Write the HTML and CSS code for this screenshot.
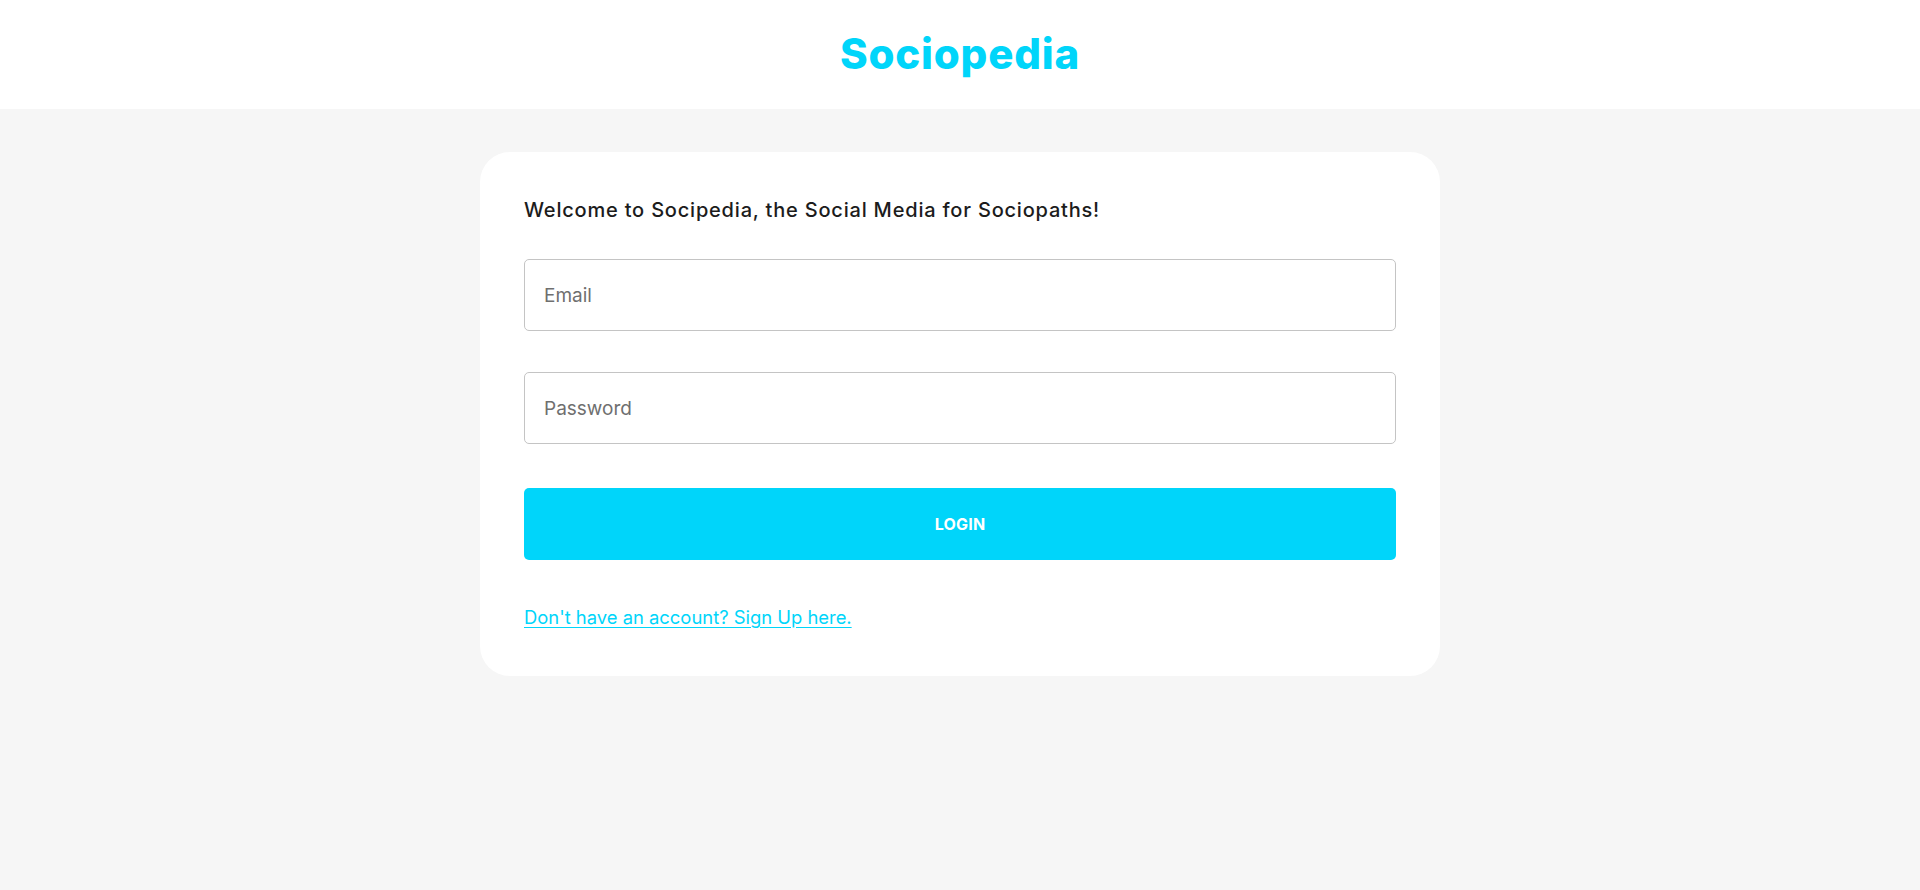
FILE: index.html
```html
<!DOCTYPE html>
<html lang="en">
<head>
<meta charset="utf-8">
<title>Sociopedia</title>
<link rel="stylesheet" href="styles.css">
</head>
<body>
<header class="topbar">
  <h1 class="brand">Sociopedia</h1>
</header>
<main class="page">
  <section class="card">
    <h5 class="welcome">Welcome to Socipedia, the Social Media for Sociopaths!</h5>
    <form class="form">
      <div class="field"><input class="input" type="email" placeholder="Email"></div>
      <div class="field field-gap"><input class="input" type="password" placeholder="Password"></div>
      <button class="btn" type="button">LOGIN</button>
      <a class="switch" href="#">Don't have an account? Sign Up here.</a>
    </form>
  </section>
</main>
</body>
</html>
```

FILE: styles.css
```css
* { box-sizing: border-box; }
html, body {
  margin: 0;
  padding: 0;
  height: 100%;
}
body {
  background: #f6f6f6;
  font-family: Inter, "Noto Sans", sans-serif;
  color: #1f1f1f;
}
.topbar {
  background: #ffffff;
  height: 109px;
  display: flex;
  align-items: center;
  justify-content: center;
}
.brand {
  margin: 0;
  font-family: Inter, sans-serif;
  font-weight: 800;
  font-size: 42px;
  line-height: 1;
  color: #00d5fa;
  letter-spacing: 0.8px;
  padding-bottom: 1px;
}
.page {
  display: flex;
  justify-content: center;
  padding-top: 43px;
}
.card {
  width: 960px;
  background: #ffffff;
  border-radius: 30px;
  padding: 46px 44px 47px;
}
.welcome {
  margin: 0 0 37px;
  font-size: 20px;
  line-height: 24px;
  font-weight: 500;
  letter-spacing: 0.8px;
  color: #1c1c1c;
}
.form {
  display: flex;
  flex-direction: column;
}
.field-gap { margin-top: 41px; }
.input {
  display: block;
  width: 100%;
  height: 72px;
  border: 1px solid #c4c4c4;
  border-radius: 5px;
  padding: 0 19px;
  font-family: Inter, sans-serif;
  font-size: 19px;
  color: #333;
  background: #fff;
  outline: none;
}
.input::placeholder { color: #6f6f6f; opacity: 1; }
.btn {
  margin-top: 44px;
  height: 72px;
  border: none;
  border-radius: 5px;
  background: #00d5fa;
  color: #ffffff;
  font-family: Inter, sans-serif;
  font-weight: 700;
  font-size: 16px;
  letter-spacing: 0.2px;
}
.switch {
  margin-top: 45px;
  align-self: flex-start;
  font-size: 18.4px;
  line-height: 24px;
  color: #00d5fa;
  text-decoration: underline;
  text-underline-offset: 3px;
}
```
